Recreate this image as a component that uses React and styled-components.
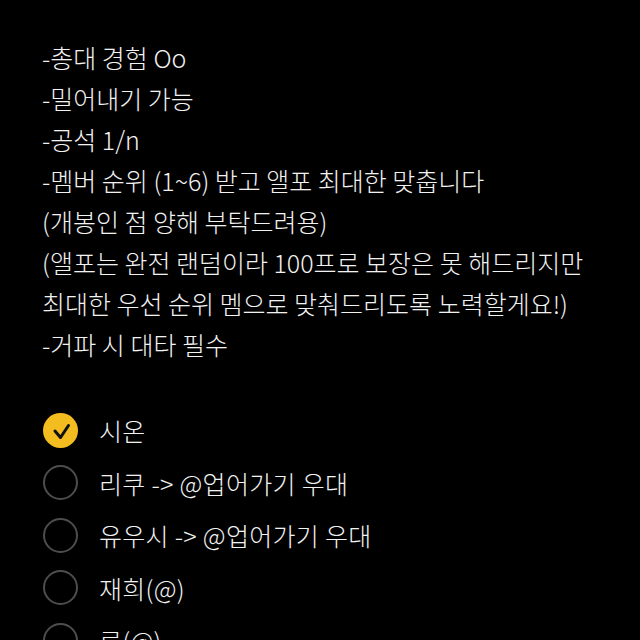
import styled, { createGlobalStyle } from "styled-components";

const GlobalStyle = createGlobalStyle`
  html, body {
    margin: 0;
    padding: 0;
    background: #000;
  }
  body {
    font-family: "Noto Sans CJK KR", "Noto Sans", sans-serif;
    font-weight: 300;
    color: #f2f2f2;
  }
`;

const Page = styled.div`
  width: 640px;
  height: 640px;
  overflow: hidden;
  background: #000;
  padding: 37px 0 0 42px;
  box-sizing: border-box;
`;

const Notes = styled.div`
  display: flex;
  flex-direction: column;
`;

const Line = styled.div`
  font-size: 25px;
  line-height: 41px;
  height: 41px;
  white-space: nowrap;
`;

const OptionList = styled.div`
  display: flex;
  flex-direction: column;
  margin-top: 39px;
`;

const Option = styled.div`
  display: flex;
  align-items: center;
  height: 52.5px;
  gap: 21px;
`;

const Circle = styled.div`
  width: 35px;
  height: 35px;
  flex: none;
  margin-left: 1px;
  border-radius: 50%;
  box-sizing: border-box;
  display: flex;
  align-items: center;
  justify-content: center;
  background: ${(p) => (p.$checked ? "#f4bd1f" : "transparent")};
  border: ${(p) => (p.$checked ? "none" : "2.5px solid #4d4d4d")};
`;

const Label = styled.span`
  font-size: 25px;
  letter-spacing: 0.3px;
  white-space: nowrap;
`;

const notes = [
  "-총대 경험 Oo",
  "-밀어내기 가능",
  "-공석 1/n",
  "-멤버 순위 (1~6) 받고 앨포 최대한 맞춥니다",
  "(개봉인 점 양해 부탁드려용)",
  "(앨포는 완전 랜덤이라 100프로 보장은 못 해드리지만",
  "최대한 우선 순위 멤으로 맞춰드리도록 노력할게요!)",
  "-거파 시 대타 필수",
];

const options = [
  { label: "시온", checked: true },
  { label: "리쿠 -> @업어가기 우대" },
  { label: "유우시 -> @업어가기 우대" },
  { label: "재희(@)" },
  { label: "료(@)" },
];

const Check = () => (
  <svg width="35" height="35" viewBox="0 0 35 35">
    <path
      d="M12 18 L17.5 24.5 L25.5 12.5"
      fill="none"
      stroke="#111"
      strokeWidth="3"
      strokeLinecap="round"
      strokeLinejoin="round"
    />
  </svg>
);

export default function App() {
  return (
    <>
      <GlobalStyle />
      <Page>
        <Notes>
          {notes.map((t, i) => (
            <Line key={i}>{t}</Line>
          ))}
        </Notes>
        <OptionList>
          {options.map((o, i) => (
            <Option key={i}>
              <Circle $checked={o.checked}>{o.checked && <Check />}</Circle>
              <Label>{o.label}</Label>
            </Option>
          ))}
        </OptionList>
      </Page>
    </>
  );
}
